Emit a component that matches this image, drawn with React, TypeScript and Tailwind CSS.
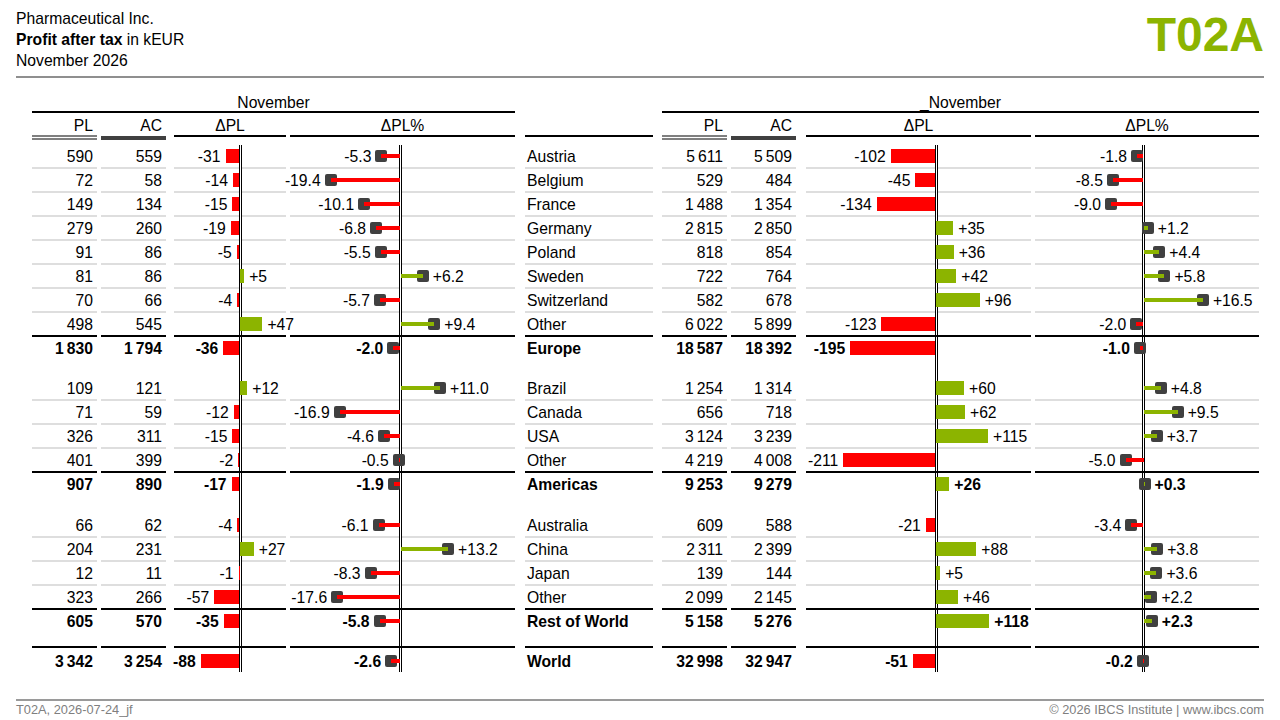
import React from 'react';

// PL, AC, ΔPL, ΔPL%
type Vals = [number, number, number, number];

interface Line {
  name: string;
  l: Vals;
  r: Vals;
}

interface Group {
  rows: Line[];
  total: Line;
  gap: string;
}

const groups: Group[] = [
  {
    rows: [
      { name: 'Austria', l: [590, 559, -31, -5.3], r: [5611, 5509, -102, -1.8] },
      { name: 'Belgium', l: [72, 58, -14, -19.4], r: [529, 484, -45, -8.5] },
      { name: 'France', l: [149, 134, -15, -10.1], r: [1488, 1354, -134, -9.0] },
      { name: 'Germany', l: [279, 260, -19, -6.8], r: [2815, 2850, 35, 1.2] },
      { name: 'Poland', l: [91, 86, -5, -5.5], r: [818, 854, 36, 4.4] },
      { name: 'Sweden', l: [81, 86, 5, 6.2], r: [722, 764, 42, 5.8] },
      { name: 'Switzerland', l: [70, 66, -4, -5.7], r: [582, 678, 96, 16.5] },
      { name: 'Other', l: [498, 545, 47, 9.4], r: [6022, 5899, -123, -2.0] },
    ],
    total: { name: 'Europe', l: [1830, 1794, -36, -2.0], r: [18587, 18392, -195, -1.0] },
    gap: 'h-[16px]',
  },
  {
    rows: [
      { name: 'Brazil', l: [109, 121, 12, 11.0], r: [1254, 1314, 60, 4.8] },
      { name: 'Canada', l: [71, 59, -12, -16.9], r: [656, 718, 62, 9.5] },
      { name: 'USA', l: [326, 311, -15, -4.6], r: [3124, 3239, 115, 3.7] },
      { name: 'Other', l: [401, 399, -2, -0.5], r: [4219, 4008, -211, -5.0] },
    ],
    total: { name: 'Americas', l: [907, 890, -17, -1.9], r: [9253, 9279, 26, 0.3] },
    gap: 'h-[17px]',
  },
  {
    rows: [
      { name: 'Australia', l: [66, 62, -4, -6.1], r: [609, 588, -21, -3.4] },
      { name: 'China', l: [204, 231, 27, 13.2], r: [2311, 2399, 88, 3.8] },
      { name: 'Japan', l: [12, 11, -1, -8.3], r: [139, 144, 5, 3.6] },
      { name: 'Other', l: [323, 266, -57, -17.6], r: [2099, 2145, 46, 2.2] },
    ],
    total: { name: 'Rest of World', l: [605, 570, -35, -5.8], r: [5158, 5276, 118, 2.3] },
    gap: 'h-[12px]',
  },
];

const world: Line = { name: 'World', l: [3342, 3254, -88, -2.6], r: [32998, 32947, -51, -0.2] };

const BAR_SCALE = 0.435;
const PIN_SCALE = 3.6;

// left edge of the double axis line inside each chart column
const AX = { lDpl: 65, lDpp: 109, rDpl: 129, rDpp: 107 };

type Edge = 'light' | 'dark' | 'none' | 'top';

const edgeCls = (e: Edge) => {
  if (e === 'light') return 'h-[24px] border-b-2 border-[#dedede]';
  if (e === 'dark') return 'h-[24px] border-b-2 border-black';
  if (e === 'top') return 'h-[26px] border-t-2 border-black pt-[2px]';
  return 'h-[24px]';
};

const group3 = (n: number) => String(Math.abs(n)).replace(/\B(?=(\d{3})+(?!\d))/g, '\u2009');
const fmt = (n: number) => (n < 0 ? '-' : '') + group3(n);
const fmtD = (n: number) => (n > 0 ? '+' : '-') + group3(n);
const fmtP = (n: number) => (n > 0 ? '+' : '-') + Math.abs(n).toFixed(1);

function Axis({ a, edge }: { a: number; edge: Edge }) {
  return (
    <div
      className={`absolute top-0 w-[3px] border-x border-black bg-white ${edge === 'light' ? 'bottom-[-2px]' : 'bottom-0'}`}
      style={{ left: a }}
    />
  );
}

function NumCell({ w, v, edge }: { w: string; v: number; edge: Edge }) {
  return <div className={`shrink-0 ${w} ${edgeCls(edge)} pr-[4px] text-right leading-[23px]`}>{fmt(v)}</div>;
}

function BarCell({ w, ml, a, v, edge }: { w: string; ml: string; a: number; v: number; edge: Edge }) {
  const bw = Math.abs(v) * BAR_SCALE;
  const neg = v < 0;
  return (
    <div className={`relative shrink-0 ${w} ${ml} ${edgeCls(edge)}`}>
      <Axis a={a} edge={edge} />
      <div className="relative h-[22px]">
        <div
          className={`absolute top-[4px] h-[14px] ${neg ? 'bg-[#ff0000]' : 'bg-[#8cb400]'}`}
          style={neg ? { left: a - bw, width: bw } : { left: a + 1, width: bw + 2 }}
        >
          <span
            className={`absolute top-[-4px] whitespace-nowrap leading-[23px] ${neg ? 'right-full mr-[5px]' : 'left-full ml-[5px]'}`}
          >
            {fmtD(v)}
          </span>
        </div>
      </div>
    </div>
  );
}

function PinCell({ w, ml, a, v, edge }: { w: string; ml: string; a: number; v: number; edge: Edge }) {
  const zero = a + 1.5;
  const pos = zero + v * PIN_SCALE;
  const neg = v < 0;
  return (
    <div className={`relative shrink-0 ${w} ${ml} ${edgeCls(edge)}`}>
      <Axis a={a} edge={edge} />
      <div className="relative h-[22px]">
        <div className="absolute top-0 h-[22px] w-0" style={{ left: pos }}>
          <div className="absolute left-[-6px] top-[5px] h-[12px] w-[12px] rounded-[2px] bg-[#404040]" />
          <span
            className={`absolute top-0 whitespace-nowrap leading-[23px] ${neg ? 'right-full mr-[10px]' : 'left-full ml-[10px]'}`}
          >
            {fmtP(v)}
          </span>
        </div>
        <div
          className={`absolute top-[9px] h-[4px] ${neg ? 'bg-[#ff0000]' : 'bg-[#8cb400]'}`}
          style={{ left: Math.min(zero, pos), width: Math.abs(pos - zero) }}
        />
      </div>
    </div>
  );
}

function DataRow({ line, edge, bold }: { line: Line; edge: Edge; bold?: boolean }) {
  return (
    <div className={`flex pl-[32px] ${bold ? 'font-bold' : ''}`}>
      <NumCell w="w-[65px]" v={line.l[0]} edge={edge} />
      <div className="ml-[4px]">
        <NumCell w="w-[65px]" v={line.l[1]} edge={edge} />
      </div>
      <BarCell w="w-[112px]" ml="ml-[8px]" a={AX.lDpl} v={line.l[2]} edge={edge} />
      <PinCell w="w-[225px]" ml="ml-[4px]" a={AX.lDpp} v={line.l[3]} edge={edge} />
      <div className={`ml-[10px] w-[128px] shrink-0 ${edgeCls(edge)} pl-[2px] leading-[23px] whitespace-nowrap`}>
        {line.name}
      </div>
      <div className="ml-[9px]">
        <NumCell w="w-[65px]" v={line.r[0]} edge={edge} />
      </div>
      <div className="ml-[4px]">
        <NumCell w="w-[65px]" v={line.r[1]} edge={edge} />
      </div>
      <BarCell w="w-[225px]" ml="ml-[10px]" a={AX.rDpl} v={line.r[2]} edge={edge} />
      <PinCell w="w-[224px]" ml="ml-[4px]" a={AX.rDpp} v={line.r[3]} edge={edge} />
    </div>
  );
}

function Spacer({ h }: { h: string }) {
  return (
    <div className={`flex pl-[32px] ${h}`}>
      <div className="relative ml-[142px] w-[112px] shrink-0">
        <Axis a={AX.lDpl} edge="none" />
      </div>
      <div className="relative ml-[4px] w-[225px] shrink-0">
        <Axis a={AX.lDpp} edge="none" />
      </div>
      <div className="relative ml-[291px] w-[225px] shrink-0">
        <Axis a={AX.rDpl} edge="none" />
      </div>
      <div className="relative ml-[4px] w-[224px] shrink-0">
        <Axis a={AX.rDpp} edge="none" />
      </div>
    </div>
  );
}

function ColumnHeads() {
  const head = 'h-[22px] shrink-0 pt-[3px] leading-[20px]';
  return (
    <>
      <div className="mt-[15px] flex pl-[32px]">
        <div className="h-[20px] w-[483px] border-b-2 border-black text-center leading-[19px]">November</div>
        <div className="ml-[147px] h-[20px] w-[597px] border-b-2 border-black text-center leading-[19px]">
          _November
        </div>
      </div>
      <div className="flex pl-[32px]">
        <div className={`${head} w-[65px] pr-[4px] text-right`}>PL</div>
        <div className={`${head} ml-[4px] w-[65px] pr-[4px] text-right`}>AC</div>
        <div className={`${head} ml-[8px] w-[112px] text-center`}>ΔPL</div>
        <div className={`${head} ml-[4px] w-[225px] text-center`}>ΔPL%</div>
        <div className={`${head} ml-[10px] w-[128px]`} />
        <div className={`${head} ml-[9px] w-[65px] pr-[4px] text-right`}>PL</div>
        <div className={`${head} ml-[4px] w-[65px] pr-[4px] text-right`}>AC</div>
        <div className={`${head} ml-[10px] w-[225px] text-center`}>ΔPL</div>
        <div className={`${head} ml-[4px] w-[224px] text-center`}>ΔPL%</div>
      </div>
      <div className="flex h-[5px] items-start pl-[32px]">
        <div className="h-[5px] w-[65px] shrink-0 border-y-2 border-[#7f7f7f]" />
        <div className="ml-[4px] mt-[1px] h-[4px] w-[65px] shrink-0 bg-[#404040]" />
        <div className="ml-[8px] h-[2px] w-[112px] shrink-0 bg-black" />
        <div className="ml-[4px] h-[2px] w-[225px] shrink-0 bg-black" />
        <div className="ml-[10px] h-[2px] w-[128px] shrink-0 bg-black" />
        <div className="ml-[9px] h-[5px] w-[65px] shrink-0 border-y-2 border-[#7f7f7f]" />
        <div className="ml-[4px] mt-[1px] h-[4px] w-[65px] shrink-0 bg-[#404040]" />
        <div className="ml-[10px] h-[2px] w-[225px] shrink-0 bg-black" />
        <div className="ml-[4px] h-[2px] w-[224px] shrink-0 bg-black" />
      </div>
    </>
  );
}

export default function App() {
  return (
    <div className="relative h-[720px] w-[1280px] overflow-hidden bg-white font-['Liberation_Sans',Arial,Helvetica,sans-serif] text-black">
      <header className="flex justify-between px-4 pt-[8px]">
        <div className="text-[15.7px] leading-[21px]">
          <div>Pharmaceutical Inc.</div>
          <div>
            <span className="font-bold">Profit after tax</span> in kEUR
          </div>
          <div>November 2026</div>
        </div>
        <div className="mt-[3px] text-[48px] font-bold leading-none text-[#8cb400]">T02A</div>
      </header>
      <div className="mx-4 mt-[5px] h-[2px] bg-[#8f8f8f]" />

      <div className="text-[15.7px]">
        <ColumnHeads />
        <div className="mt-[5px]">
          {groups.map((g) => (
            <React.Fragment key={g.total.name}>
              {g.rows.map((r, i) => (
                <DataRow key={r.name + i} line={r} edge={i === g.rows.length - 1 ? 'dark' : 'light'} />
              ))}
              <DataRow line={g.total} edge="none" bold />
              <Spacer h={g.gap} />
            </React.Fragment>
          ))}
          <DataRow line={world} edge="top" bold />
        </div>
      </div>

      <div className="mx-4 mt-[27px] h-[2px] bg-[#9a9a9a]" />
      <div className="mx-4 flex justify-between text-[12.8px] leading-[18px] text-[#7f7f7f]">
        <span>T02A, 2026-07-24_jf</span>
        <span>© 2026 IBCS Institute | www.ibcs.com</span>
      </div>
    </div>
  );
}
